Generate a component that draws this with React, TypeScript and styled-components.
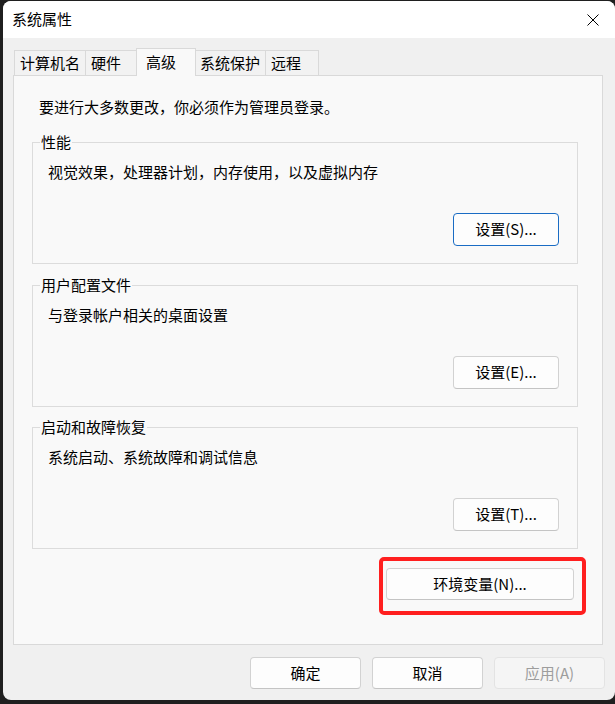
import React from "react";
import styled, { createGlobalStyle } from "styled-components";

const GlobalStyle = createGlobalStyle`
  html, body {
    margin: 0;
    padding: 0;
    background: #1f1f1f;
    overflow: hidden;
  }
  body {
    font-family: "Noto Sans CJK SC", "Noto Sans", sans-serif;
  }
`;

const Window = styled.div`
  box-sizing: border-box;
  margin: 1px 0 0 3px;
  width: 612px;
  height: 699px;
  border-radius: 8px;
  overflow: hidden;
  display: flex;
  flex-direction: column;
  background: #f0f0f0;
  color: #000;
  font-size: 15px;
  line-height: 20px;
`;

const TitleBar = styled.div`
  height: 37px;
  flex-shrink: 0;
  display: flex;
  align-items: center;
  justify-content: space-between;
  background: #fff;
  padding-left: 9px;
`;

const Title = styled.span`
  padding-bottom: 1px;
`;

const CloseButton = styled.button`
  width: 44px;
  height: 37px;
  padding: 0;
  border: none;
  background: transparent;
  display: flex;
  align-items: center;
  justify-content: center;
`;

const Body = styled.div`
  flex: 1;
  display: flex;
  flex-direction: column;
  padding: 10px 0 11px 10px;
`;

const TabStrip = styled.div`
  position: relative;
  z-index: 1;
  display: flex;
  align-items: flex-start;
  padding-left: 1px;
`;

const Tab = styled.div<{ $active?: boolean }>`
  box-sizing: border-box;
  min-width: ${(p) => (p.$active ? 60 : 54)}px;
  height: ${(p) => (p.$active ? 28 : 25)}px;
  margin: ${(p) => (p.$active ? "0 -2px 0 -2px" : "2px -1px 0 0")};
  padding: ${(p) => (p.$active ? "0 7px 2px 9px" : "0 5px 0 5px")};
  display: flex;
  align-items: center;
  border: 1px solid #d9d9d9;
  border-bottom: none;
  background: ${(p) => (p.$active ? "#f9f9f9" : "#f2f2f2")};
  position: relative;
  z-index: ${(p) => (p.$active ? 2 : 1)};
  white-space: nowrap;
`;

const Pane = styled.div`
  box-sizing: border-box;
  width: 590px;
  height: 570px;
  margin-top: -1px;
  border: 1px solid #d9d9d9;
  background: #f9f9f9;
  padding: 21px 24px 0 18px;
  display: flex;
  flex-direction: column;
`;

const Intro = styled.div`
  margin-left: 7px;
`;

const GroupBox = styled.fieldset<{ $gap: number }>`
  margin: ${(p) => p.$gap}px 0 0 0;
  min-width: 0;
  border: 1px solid #dcdcdc;
  padding: 10px 18px 17px 15px;
  display: flex;
  flex-direction: column;
`;

const GroupLabel = styled.legend`
  margin-left: -8px;
  padding: 0 1px;
  line-height: 20px;
`;

const GroupText = styled.div``;

const Button = styled.button<{ $width: number; $height?: number; $focused?: boolean }>`
  box-sizing: border-box;
  width: ${(p) => p.$width}px;
  height: ${(p) => p.$height ?? 32}px;
  padding: 0 0 1px 0;
  font-family: inherit;
  font-size: 15px;
  line-height: 20px;
  color: #000;
  background: #fdfdfd;
  border: 1px solid ${(p) => (p.$focused ? "#1a6cc4" : "#d2d2d2")};
  border-bottom-color: ${(p) => (p.$focused ? "#1a6cc4" : "#c4c4c4")};
  border-radius: 4px;
  &:disabled {
    color: #9d9d9d;
    background: #f5f5f5;
    border-color: #e3e3e3;
  }
`;

const GroupButton = styled(Button)`
  align-self: flex-end;
  margin-top: 31px;
`;

const EnvRow = styled.div`
  display: flex;
  justify-content: flex-end;
  margin: 8px -8px 0 0;
`;

const Highlight = styled.div`
  border: 4px solid #ff1f1f;
  border-radius: 5px;
  padding: 7px 8px 11px 3px;
  display: flex;
`;

const Footer = styled.div`
  display: flex;
  justify-content: flex-end;
  gap: 11px;
  margin-top: 12px;
  padding-right: 10px;
`;

const groups = [
  { title: "性能", text: "视觉效果，处理器计划，内存使用，以及虚拟内存", button: "设置(S)...", gap: 15, focused: true },
  { title: "用户配置文件", text: "与登录帐户相关的桌面设置", button: "设置(E)...", gap: 11, focused: false },
  { title: "启动和故障恢复", text: "系统启动、系统故障和调试信息", button: "设置(T)...", gap: 10, focused: false },
];

const tabs = ["计算机名", "硬件", "高级", "系统保护", "远程"];

export default function App() {
  return (
    <>
      <GlobalStyle />
      <Window>
        <TitleBar>
          <Title>系统属性</Title>
          <CloseButton aria-label="关闭">
            <svg width="12" height="12" viewBox="0 0 12 12">
              <path d="M0.5 0.5 L11.5 11.5 M11.5 0.5 L0.5 11.5" stroke="#000" strokeWidth="1" fill="none" />
            </svg>
          </CloseButton>
        </TitleBar>
        <Body>
          <TabStrip>
            {tabs.map((t) => (
              <Tab key={t} $active={t === "高级"}>
                {t}
              </Tab>
            ))}
          </TabStrip>
          <Pane>
            <Intro>要进行大多数更改，你必须作为管理员登录。</Intro>
            {groups.map((g) => (
              <GroupBox key={g.title} $gap={g.gap}>
                <GroupLabel>{g.title}</GroupLabel>
                <GroupText>{g.text}</GroupText>
                <GroupButton $width={106} $height={33} $focused={g.focused}>
                  {g.button}
                </GroupButton>
              </GroupBox>
            ))}
            <EnvRow>
              <Highlight>
                <Button $width={188}>环境变量(N)...</Button>
              </Highlight>
            </EnvRow>
          </Pane>
          <Footer>
            <Button $width={111}>确定</Button>
            <Button $width={111}>取消</Button>
            <Button $width={111} disabled>
              应用(A)
            </Button>
          </Footer>
        </Body>
      </Window>
    </>
  );
}
